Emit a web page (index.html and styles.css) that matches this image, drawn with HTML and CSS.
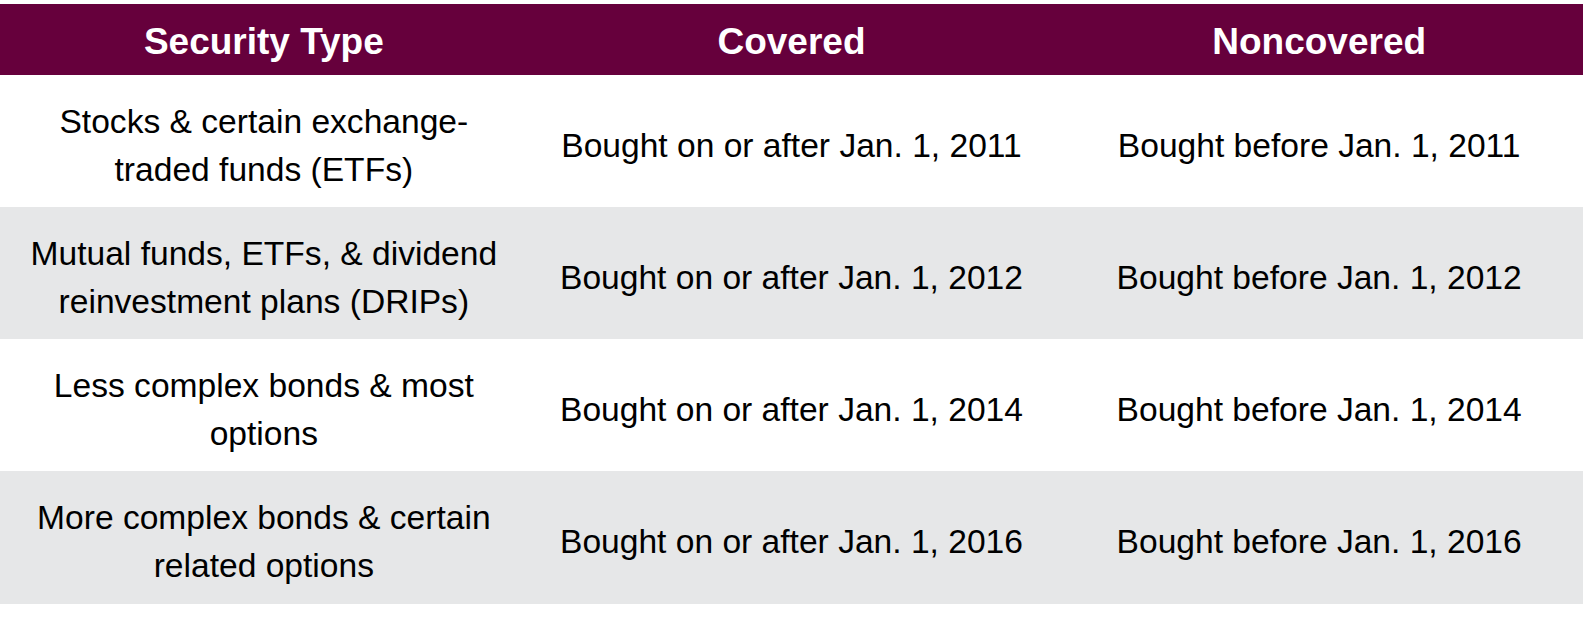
FILE: index.html
```html
<!DOCTYPE html>
<html lang="en">
<head>
<meta charset="utf-8">
<title>Cost basis reporting</title>
<link rel="stylesheet" href="styles.css">
</head>
<body>
<div class="table">
  <div class="row head">
    <div class="cell">Security Type</div>
    <div class="cell">Covered</div>
    <div class="cell">Noncovered</div>
  </div>
  <div class="row">
    <div class="cell">Stocks &amp; certain exchange-traded funds (ETFs)</div>
    <div class="cell">Bought on or after Jan. 1, 2011</div>
    <div class="cell">Bought before Jan. 1, 2011</div>
  </div>
  <div class="row alt">
    <div class="cell">Mutual funds, ETFs, &amp; dividend reinvestment plans (DRIPs)</div>
    <div class="cell">Bought on or after Jan. 1, 2012</div>
    <div class="cell">Bought before Jan. 1, 2012</div>
  </div>
  <div class="row">
    <div class="cell">Less complex bonds &amp; most options</div>
    <div class="cell">Bought on or after Jan. 1, 2014</div>
    <div class="cell">Bought before Jan. 1, 2014</div>
  </div>
  <div class="row alt last">
    <div class="cell">More complex bonds &amp; certain related options</div>
    <div class="cell">Bought on or after Jan. 1, 2016</div>
    <div class="cell">Bought before Jan. 1, 2016</div>
  </div>
</div>
</body>
</html>
```
FILE: styles.css
```css
html, body {
  margin: 0;
  padding: 0;
  background: #ffffff;
}
body {
  font-family: "Liberation Sans", Arial, Helvetica, sans-serif;
  color: #000000;
}
.table {
  margin-top: 4px;
  width: 100%;
}
.row {
  display: grid;
  grid-template-columns: 1fr 1fr 1fr;
  height: 132px;
  background: #ffffff;
}
.row.alt {
  background: #e6e7e8;
}
.row.last {
  height: 133px;
}
.cell {
  display: flex;
  align-items: center;
  justify-content: center;
  text-align: center;
  padding: 9px 22px 0;
  font-size: 33.6px;
  line-height: 48px;
}
.row.head {
  height: 71px;
  background: #66003c;
  color: #ffffff;
}
.row.head .cell {
  font-weight: bold;
  font-size: 37px;
  line-height: 42px;
  padding-top: 4px;
}
```
